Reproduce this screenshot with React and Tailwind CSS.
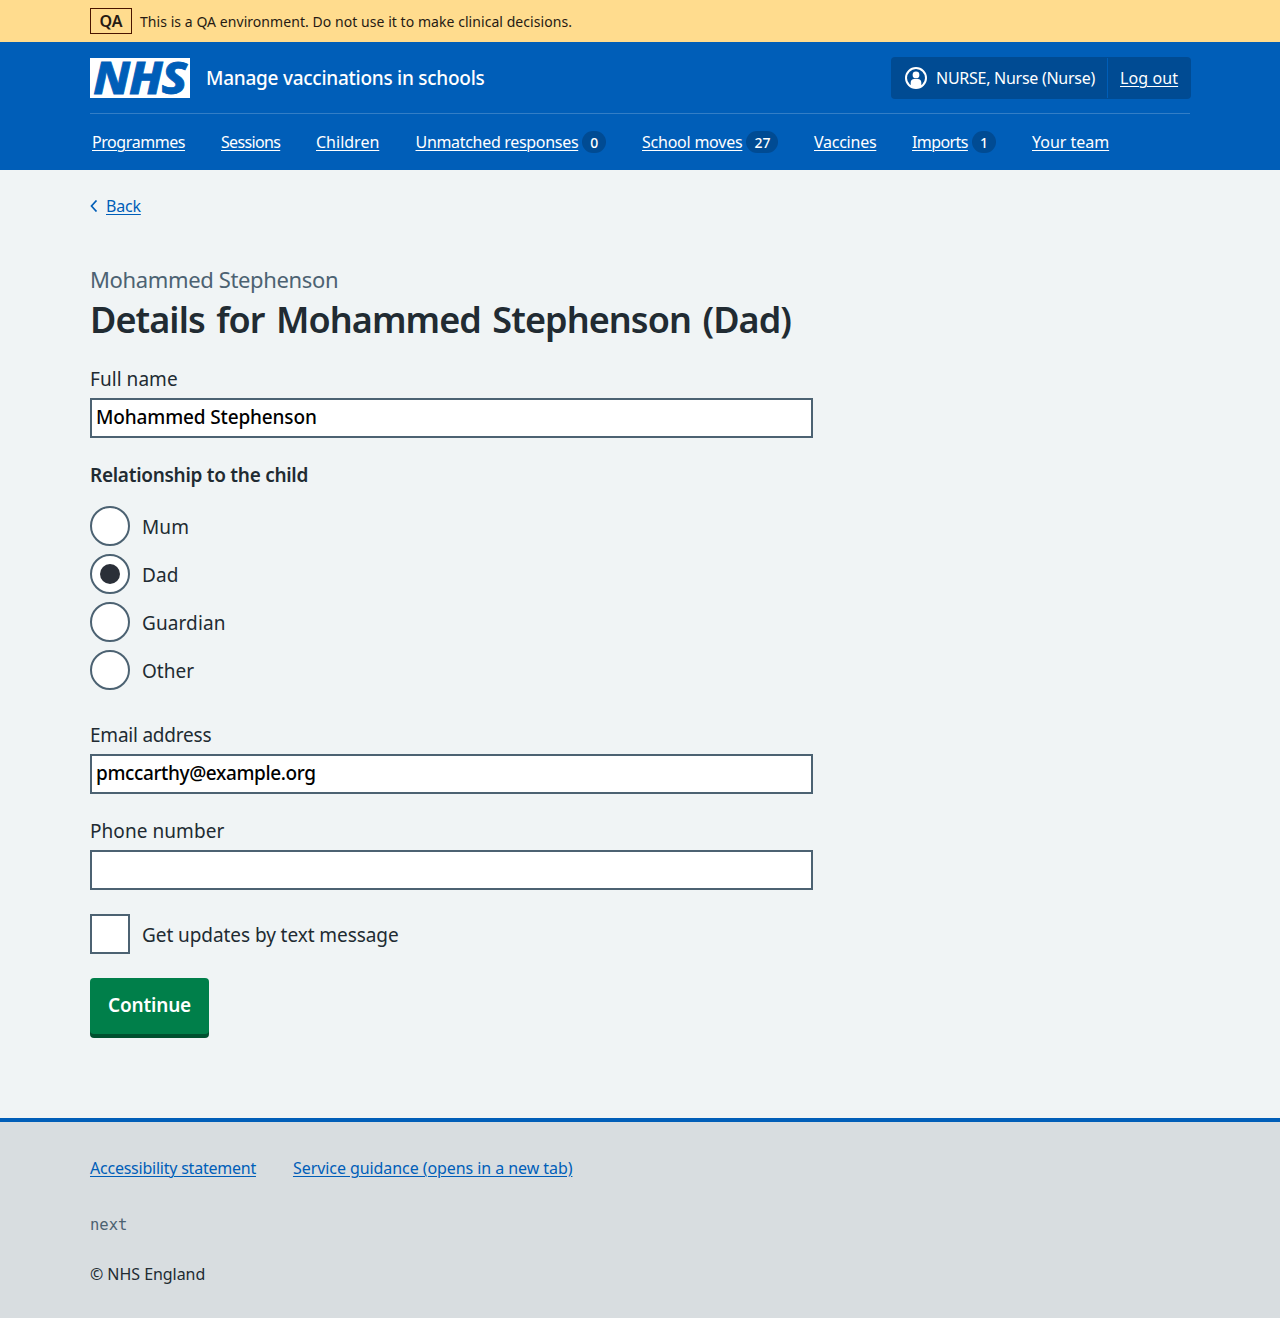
const navItems = [
  { label: 'Programmes', box: 'w-[129px]', text: 'tracking-[-0.43px]' },
  { label: 'Sessions', box: 'w-[95px]', text: 'tracking-[-0.66px]' },
  { label: 'Children', box: 'w-[99.5px]', text: 'tracking-[0px]' },
  { label: 'Unmatched responses', box: 'w-[226.5px]', text: 'tracking-[-0.31px]', count: 0 },
  { label: 'School moves', box: 'w-[172px]', text: 'tracking-[-0.23px]', count: 27 },
  { label: 'Vaccines', box: 'w-[98px]', text: 'tracking-[-0.25px]' },
  { label: 'Imports', box: 'w-[120px]', text: 'tracking-[-0.58px]', count: 1 },
  { label: 'Your team', box: 'w-[80px]', text: 'tracking-[-0.02px]' },
];

const relationships = [
  { label: 'Mum', text: 'tracking-[0.1px]' },
  { label: 'Dad', text: 'tracking-[0.1px]' },
  { label: 'Guardian', text: 'tracking-[0.1px]' },
  { label: 'Other', text: 'tracking-[0.02px]' },
];

const link = 'underline decoration-1 underline-offset-[2px] [text-decoration-skip-ink:auto]';

function Container({ className = '', children }) {
  return <div className={`mx-auto w-[1100px] ${className}`}>{children}</div>;
}

function NhsLogo() {
  return (
    <svg className="h-10 w-[100px] shrink-0 overflow-visible" viewBox="0 0 100 40" aria-label="NHS">
      <rect width="100" height="40" fill="white" />
      <text
        x="3.200"
        y="35.500"
        textLength="93"
        lengthAdjust="spacingAndGlyphs"
        className="fill-[#005eb8] stroke-[#005eb8] stroke-[0.8px] font-['Noto_Sans'] text-[44px] font-extrabold tracking-[-1px] italic"
      >
        NHS
      </text>
    </svg>
  );
}

function UserIcon() {
  return (
    <svg className="size-6 shrink-0" viewBox="0 0 24 24" fill="none">
      <circle cx="12" cy="12" r="10" stroke="white" strokeWidth="2" />
      <circle cx="12" cy="8.9" r="3.4" fill="white" />
      <path d="M6.7 20v-3.6c0-2 1.4-3.400 3.400-3.400h3.800c2 0 3.400 1.400 3.400 3.400V20c-3 2.400-7.600 2.400-10.600 0Z" fill="white" />
    </svg>
  );
}

function Field({ label, labelClass, value, valueClass = '', className = '' }) {
  return (
    <div className={`w-[723px] ${className}`}>
      <label className={`mb-[5px] block text-[19px] leading-7 ${labelClass}`}>{label}</label>
      <input
        type="text"
        defaultValue={value}
        className={`block h-10 w-full border-2 border-[#4c6272] bg-white px-1 pb-[2px] text-[19px] leading-[34px] font-[470] text-[#000000] outline-none ${valueClass}`}
      />
    </div>
  );
}

export default function App() {
  return (
    <div className="flex min-h-[1318px] flex-col bg-[#f0f4f5] font-['Noto_Sans',sans-serif] text-base font-[450] text-[#212b32]">
      <div className="h-[42px] bg-[#ffdc8e] text-[#261a13]">
        <Container className="flex h-full items-center gap-2">
          <strong className="flex h-[26px] w-[42px] items-center justify-center border border-[#4a1500] text-base leading-6 font-semibold">
            QA
          </strong>
          <span className="pt-[2px] text-sm font-[420] tracking-[0.055px]">
            This is a QA environment. Do not use it to make clinical decisions.
          </span>
        </Container>
      </div>

      <header className="h-32 bg-[#005eb8] text-white">
        <Container className="box-content flex h-[71px] items-center gap-4 border-b border-[#337ec6]">
          <NhsLogo />
          <span className="text-[19px] leading-7 font-[480] tracking-[-0.26px]">
            Manage vaccinations in schools
          </span>
          <div className="mt-[1px] -mr-px ml-auto flex h-[42px] w-[300px] items-center rounded bg-[#004b93]">
            <div className="flex w-[216px] items-center gap-2 pl-[13px]">
              <UserIcon />
              <span className="tracking-[-0.27px] whitespace-nowrap">NURSE, Nurse (Nurse)</span>
            </div>
            <div className="flex h-10 flex-1 items-center border-l border-[#005eb8] pl-3">
              <a className={`${link} tracking-[0.1px]`}>Log out</a>
            </div>
          </div>
        </Container>
        <Container className="h-14 pl-[2px]">
          <nav className="flex h-14 items-center">
            {navItems.map((item) => (
              <div key={item.label} className={`flex shrink-0 items-center gap-1 whitespace-nowrap ${item.box}`}>
                <a className={`${link} ${item.text}`}>{item.label}</a>
                {item.count !== undefined && (
                  <span className="flex h-[22px] min-w-6 items-center justify-center rounded-full bg-[#004b93] px-2 pt-px text-sm leading-none font-medium">
                    {item.count}
                  </span>
                )}
              </div>
            ))}
          </nav>
        </Container>
      </header>

      <main className="h-[948px]">
        <Container className="pt-6">
          <a className="flex h-6 items-center text-[#005eb8]">
            <svg className="mr-2 h-3 w-2" viewBox="0 0 8 12" fill="none">
              <path d="M6.500 .5 1.500 6l5 5.500" stroke="#005eb8" strokeWidth="1.700" />
            </svg>
            <span className={`${link} tracking-[-0.2px]`}>Back</span>
          </a>

          <h1 className="mt-[45px]">
            <span className="block text-[22px] leading-8 font-[420] tracking-[-0.36px] text-[#4c6272]">
              Mohammed Stephenson
            </span>
            <span className="mt-[3px] block text-4xl leading-[44px] font-[640] tracking-[-0.93px] [word-spacing:3px]">
              Details for Mohammed Stephenson (Dad)
            </span>
          </h1>

          <Field
            className="mt-[23px]"
            label="Full name"
            labelClass="tracking-[0.05px]"
            value="Mohammed Stephenson"
            valueClass="tracking-[-0.14px]"
          />

          <fieldset className="mt-[23px]">
            <legend className="text-[19px] leading-7 font-semibold tracking-[-0.28px]">
              Relationship to the child
            </legend>
            <div className="mt-[17px] flex flex-col gap-2">
              {relationships.map((option) => (
                <label key={option.label} className="flex h-10 items-center gap-3">
                  <span className="flex size-10 items-center justify-center rounded-full border-2 border-[#4c6272] bg-white">
                    {option.label === 'Dad' && <span className="size-5 rounded-full bg-[#2a2f38]" />}
                  </span>
                  <span className={`pt-[2px] text-[19px] leading-7 ${option.text}`}>{option.label}</span>
                </label>
              ))}
            </div>
          </fieldset>

          <Field
            className="mt-[31px]"
            label="Email address"
            labelClass="tracking-[-0.22px]"
            value="pmccarthy@example.org"
            valueClass="tracking-[-0.38px]"
          />
          <Field className="mt-[23px]" label="Phone number" labelClass="tracking-[0.06px]" value="" />

          <label className="mt-6 flex h-10 items-center gap-3">
            <span className="size-10 border-2 border-[#4c6272] bg-white" />
            <span className="pt-[2px] text-[19px] leading-7 tracking-[-0.07px]">Get updates by text message</span>
          </label>

          <button className="mt-6 flex h-14 w-[119px] items-center justify-center rounded bg-[#007f4a] pb-[2px] text-[19px] leading-7 font-semibold tracking-[-0.17px] text-white shadow-[0_4px_0_#00502f]">
            Continue
          </button>
        </Container>
      </main>

      <footer className="h-[200px] border-t-4 border-[#005eb8] bg-[#d8dde0]">
        <Container className="pt-[34px]">
          <div className="flex gap-[37px] leading-6 text-[#005eb8]">
            <a className={`${link} tracking-[-0.23px]`}>Accessibility statement</a>
            <a className={`${link} tracking-[-0.07px]`}>Service guidance (opens in a new tab)</a>
          </div>
          <p className="mt-[33px] font-['DejaVu_Sans_Mono',monospace] text-[15.5px] leading-6 font-normal text-[#4c6272]">next</p>
          <p className="mt-[25px] leading-6 tracking-[-0.05px]">© NHS England</p>
        </Container>
      </footer>
    </div>
  );
}
